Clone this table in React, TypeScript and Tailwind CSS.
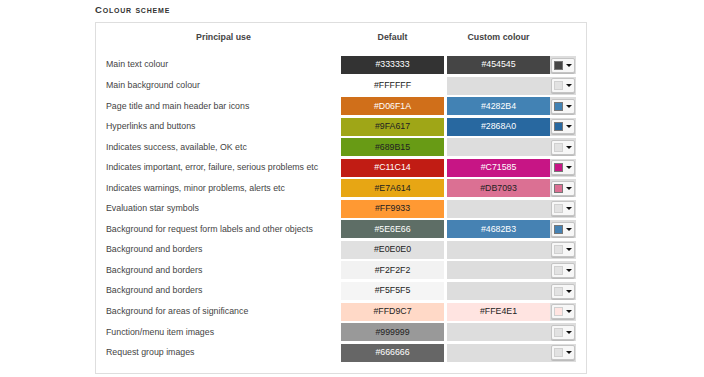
import React from 'react';

type Row = {
  label: string;
  def: string;
  defLight?: boolean;
  custom?: string;
  customLight?: boolean;
};

const rows: Row[] = [
  { label: 'Main text colour', def: '#333333', custom: '#454545' },
  { label: 'Main background colour', def: '#FFFFFF', defLight: true },
  { label: 'Page title and main header bar icons', def: '#D06F1A', custom: '#4282B4' },
  { label: 'Hyperlinks and buttons', def: '#9FA617', defLight: true, custom: '#2868A0' },
  { label: 'Indicates success, available, OK etc', def: '#689B15', defLight: true },
  { label: 'Indicates important, error, failure, serious problems etc', def: '#C11C14', custom: '#C71585' },
  { label: 'Indicates warnings, minor problems, alerts etc', def: '#E7A614', defLight: true, custom: '#DB7093', customLight: true },
  { label: 'Evaluation star symbols', def: '#FF9933', defLight: true },
  { label: 'Background for request form labels and other objects', def: '#5E6E66', custom: '#4682B3' },
  { label: 'Background and borders', def: '#E0E0E0', defLight: true },
  { label: 'Background and borders', def: '#F2F2F2', defLight: true },
  { label: 'Background and borders', def: '#F5F5F5', defLight: true },
  { label: 'Background for areas of significance', def: '#FFD9C7', defLight: true, custom: '#FFE4E1', customLight: true },
  { label: 'Function/menu item images', def: '#999999', defLight: true },
  { label: 'Request group images', def: '#666666' },
];

function Picker({ color, light }: { color?: string; light?: boolean }) {
  const pale = !color || (light && color === '#FFE4E1');
  return (
    <div className="w-[26px] h-full bg-[#dddddd] flex items-center justify-center">
      <div className="w-[24px] h-[15px] bg-[#f7f7f7] border border-[#c4c4c4] rounded-[2px] flex items-center pl-[2px] gap-[3px] shadow-[0_1px_0_#bbb]">
        <div
          className={`w-[9px] h-[9px] border ${pale ? 'border-[#d0d0d0]' : 'border-[#777]'}`}
          style={{ backgroundColor: color ?? '#e2e2e2' }}
        />
        <div className="w-0 h-0 border-l-[3px] border-r-[3px] border-t-[3px] border-l-transparent border-r-transparent border-t-[#111]" />
      </div>
    </div>
  );
}

export default function App() {
  return (
    <div className="w-[704px] h-[377px] bg-white font-['Liberation_Sans',Arial,sans-serif] pl-[95px] pt-[4px]">
      <div className="text-[9.5px] font-bold text-[#333] [font-variant:small-caps] tracking-[0.8px] leading-[12px]">Colour scheme</div>

      <div className="mt-[6px] w-[492px] border border-[#dedede] pt-[5px] pb-[11px] pl-[10px] pr-[9px]">
        {/* header */}
        <div className="flex h-[20px] items-center text-[8.8px] font-bold text-[#444] mb-[8px]">
          <div className="w-[235px] text-center">Principal use</div>
          <div className="w-[103px] text-center">Default</div>
          <div className="w-[103px] ml-[3px] text-center">Custom colour</div>
        </div>

        {/* rows */}
        <div className="flex flex-col gap-[2.55px]">
          {rows.map((r, i) => (
            <div key={i} className="flex h-[18px] items-center text-[8.8px]">
              <div className="w-[235px] text-[#444]">{r.label}</div>
              <div
                className={`w-[103px] h-full flex items-center justify-center ${r.defLight ? 'text-[#222]' : 'text-white'}`}
                style={{ backgroundColor: r.def }}
              >
                {r.def}
              </div>
              <div
                className={`w-[103px] ml-[3px] h-full flex items-center justify-center ${r.customLight ? 'text-[#222]' : 'text-white'}`}
                style={{ backgroundColor: r.custom ?? '#dddddd' }}
              >
                {r.custom ?? ''}
              </div>
              <Picker color={r.custom} light={r.customLight} />
            </div>
          ))}
        </div>
      </div>
    </div>
  );
}
